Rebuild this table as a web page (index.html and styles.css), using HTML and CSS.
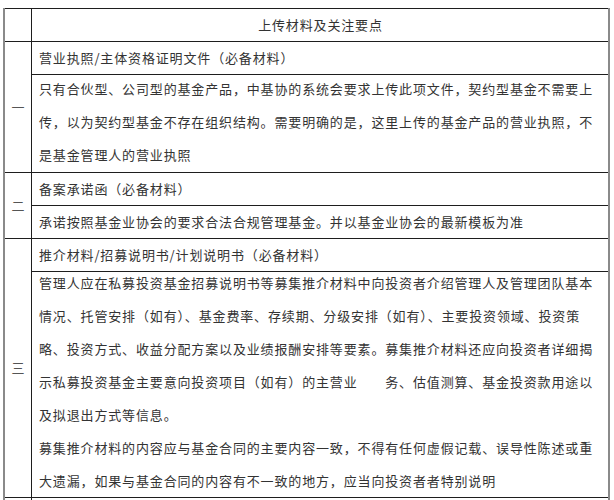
FILE: index.html
```html
<!DOCTYPE html>
<html lang="zh-CN">
<head>
<meta charset="utf-8">
<title>上传材料及关注要点</title>
<link rel="stylesheet" href="styles.css">
</head>
<body>
<table class="materials">
  <tr>
    <td class="no"></td>
    <td class="head">上传材料及关注要点</td>
  </tr>
  <tr>
    <td class="no" rowspan="2">一</td>
    <td class="title">营业执照/主体资格证明文件（必备材料）</td>
  </tr>
  <tr>
    <td class="body body-short"><p>只有合伙型、公司型的基金产品，中基协的系统会要求上传此项文件，契约型基金不需要上传，以为契约型基金不存在组织结构。需要明确的是，这里上传的基金产品的营业执照，不是基金管理人的营业执照</p></td>
  </tr>
  <tr>
    <td class="no" rowspan="2">二</td>
    <td class="title">备案承诺函（必备材料）</td>
  </tr>
  <tr>
    <td class="title">承诺按照基金业协会的要求合法合规管理基金。并以基金业协会的最新模板为准</td>
  </tr>
  <tr>
    <td class="no" rowspan="2">三</td>
    <td class="title">推介材料/招募说明书/计划说明书（必备材料）</td>
  </tr>
  <tr>
    <td class="body body-long">
      <p>管理人应在私募投资基金招募说明书等募集推介材料中向投资者介绍管理人及管理团队基本情况、托管安排（如有）、基金费率、存续期、分级安排（如有）、主要投资领域、投资策略、投资方式、收益分配方案以及业绩报酬安排等要素。募集推介材料还应向投资者详细揭示私募投资基金主要意向投资项目（如有）的主营业　　务、估值测算、基金投资款用途以及拟退出方式等信息。</p>
      <p>募集推介材料的内容应与基金合同的主要内容一致，不得有任何虚假记载、误导性陈述或重大遗漏，如果与基金合同的内容有不一致的地方，应当向投资者者特别说明</p>
    </td>
  </tr>
  <tr>
    <td class="no"></td>
    <td class="title"></td>
  </tr>
</table>
</body>
</html>
```

FILE: styles.css
```css
html, body {
  background: #ffffff;
  overflow: hidden;
}

body {
  margin: 8px 0 0 3px;
}

.materials {
  border-collapse: separate;
  border-spacing: 0;
  table-layout: fixed;
  width: 607px;
  border-left: 2px solid #8a8a8a;
  border-right: 2px solid #8a8a8a;
}

.materials td {
  border-top: 1px solid #1e1e1e;
  padding: 0;
  font-family: "Noto Sans CJK SC", sans-serif;
  font-size: 13px;
  line-height: 32px;
  letter-spacing: 0.85px;
  color: #333333;
  vertical-align: middle;
}

.materials .no {
  width: 26px;
  border-right: 1px solid #1e1e1e;
  text-align: center;
  color: #555555;
  letter-spacing: 0;
}

.materials .head {
  height: 32px;
  text-align: center;
  padding-left: 1px;
}

.materials .title {
  height: 32px;
  padding-left: 7px;
}

.materials .body {
  padding: 0 9px 0 7px;
  line-height: 33px;
}

.materials .body p {
  margin: 0;
}

.materials .body-short {
  padding-bottom: 1px;
}

.materials .body-short p:first-child {
  margin-top: -3px;
}

.materials .body-long p:first-child {
  margin-top: -6px;
}
```
